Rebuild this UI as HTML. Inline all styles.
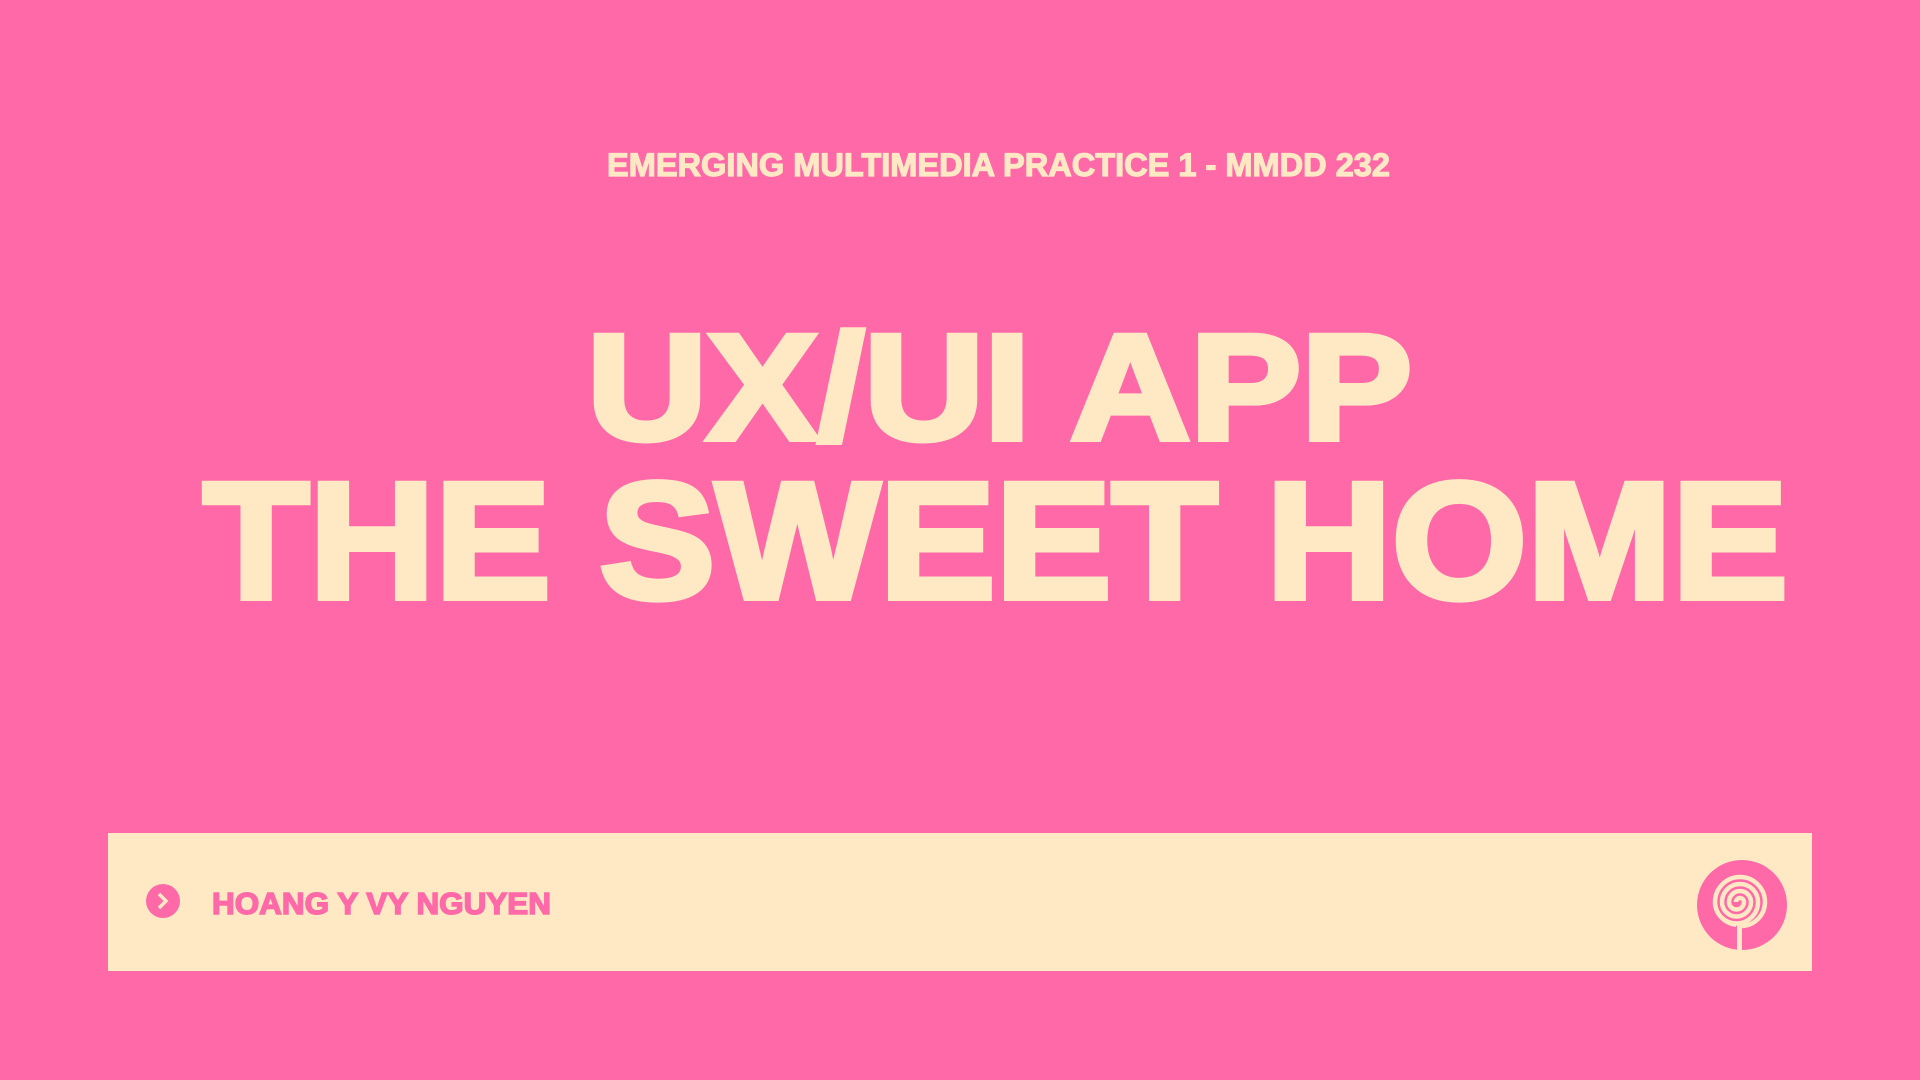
<!DOCTYPE html>
<html><head><meta charset="utf-8"><style>
html,body{margin:0;padding:0;width:1920px;height:1080px;overflow:hidden;background:#FF69A8}
svg{display:block}
text{font-family:"Liberation Sans",sans-serif;font-weight:bold}
</style></head><body>
<svg width="1920" height="1080" viewBox="0 0 1920 1080" xmlns="http://www.w3.org/2000/svg">
<rect width="1920" height="1080" fill="#FF69A8"/>
<text x="607" y="176" font-size="32" fill="#FFE9C4" stroke="#FFE9C4" stroke-width="1.2" textLength="783" lengthAdjust="spacingAndGlyphs">EMERGING MULTIMEDIA PRACTICE 1 - MMDD 232</text>
<text x="587" y="439" font-size="150" fill="#FFE9C4" stroke="#FFE9C4" stroke-width="6" stroke-linejoin="miter" textLength="825" lengthAdjust="spacingAndGlyphs">UX/UI APP</text>
<text x="203" y="598" font-size="166" fill="#FFE9C4" stroke="#FFE9C4" stroke-width="6" stroke-linejoin="miter" textLength="1585" lengthAdjust="spacingAndGlyphs">THE SWEET HOME</text>
<rect x="108" y="833" width="1704" height="138" fill="#FFE9C4"/>
<circle cx="163" cy="901" r="17" fill="#FF69A8"/>
<path d="M159 894 L166 901 L159 908" stroke="#FFE9C4" stroke-width="3.5" fill="none"/>
<text x="212" y="914" font-size="31" fill="#FF69A8" stroke="#FF69A8" stroke-width="1.5" textLength="339" lengthAdjust="spacingAndGlyphs">HOANG Y VY NGUYEN</text>
<circle cx="1742" cy="905" r="45" fill="#FF69A8"/>
<path d="M1736 902 A4 4 0 0 1 1744 902 A7.5 7.5 0 0 1 1729 902 A11 11 0 0 1 1751 902 A14.5 14.5 0 0 1 1722 902 A18 18 0 0 1 1758 902 A21.5 21.5 0 0 1 1715 902 A25 25 0 0 1 1765 902 A24 24 0 0 1 1742 926" stroke="#FFE9C4" stroke-width="4.5" fill="none"/>
<path d="M1718 915 A24 24 0 0 0 1736 926" stroke="#FFE9C4" stroke-width="2" fill="none"/>
<rect x="1737" y="924" width="5" height="27" fill="#FFE9C4"/>
</svg>
</body></html>
